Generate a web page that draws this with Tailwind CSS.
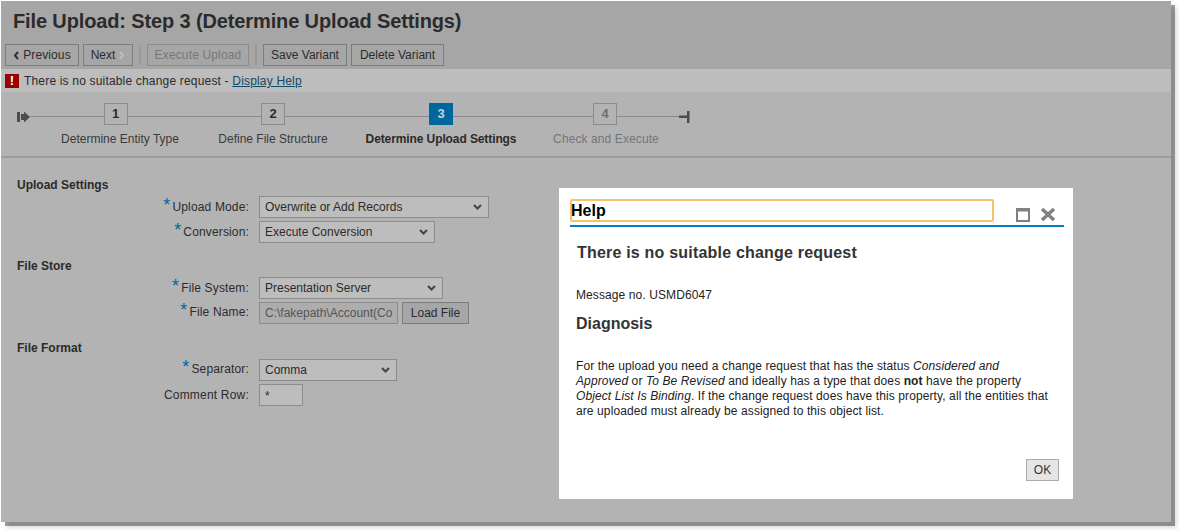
<!DOCTYPE html>
<html lang="en">
<head>
    <meta charset="UTF-8">
    <title>File Upload: Step 3</title>
    <script src="https://cdn.jsdelivr.net/npm/@tailwindcss/browser@4"></script>
</head>
<body class="bg-white min-h-screen pt-px font-['Liberation_Sans',Arial,sans-serif] text-[12px] text-[#2b2b2b]">
    <div class="relative ml-px w-[1170px] h-[521px] bg-[#b3b3b3] shadow-[4px_4px_0_rgba(0,0,0,0.36),6px_6px_5px_rgba(0,0,0,0.15)]">
        <!-- header -->
        <div class="bg-[#a6a6a6] h-[68px] px-1 pt-[9px]">
            <h1 class="ml-2 text-[20px] tracking-[-0.13px] leading-[22px] font-bold text-[#2b2b2b]">File Upload: Step 3 (Determine Upload Settings)</h1>
            <div class="flex items-center mt-[12px] h-[22px]">
                <button class="h-[22px] w-[74px] border border-[#7c7c7c] tracking-[0.1px] flex items-center justify-center gap-[4px]">
                    <svg width="6" height="9" viewBox="0 0 6 9"><path d="M5 1 L2 4.5 L5 8" fill="none" stroke="#333" stroke-width="2"/></svg>Previous
                </button>
                <button class="h-[22px] w-[50px] ml-[4px] border border-[#7c7c7c] flex items-center justify-center gap-[4px]">
                    Next<svg width="6" height="9" viewBox="0 0 6 9"><path d="M1 1 L4 4.5 L1 8" fill="none" stroke="#bdbdbd" stroke-width="2"/></svg>
                </button>
                <div class="w-[2px] h-[20px] bg-[#999] ml-[6px]"></div>
                <button class="h-[22px] w-[102px] ml-[6px] border border-[#8c8c8c] tracking-[0.15px] text-[#787878]">Execute Upload</button>
                <div class="w-[2px] h-[20px] bg-[#999] ml-[6px]"></div>
                <button class="h-[22px] w-[84px] ml-[6px] border border-[#7c7c7c]">Save Variant</button>
                <button class="h-[22px] w-[93px] ml-[4px] border border-[#7c7c7c]">Delete Variant</button>
            </div>
        </div>
        <!-- message bar -->
        <div class="bg-[#bdbdbd] h-[23px] flex items-center px-1">
            <div class="w-[14px] h-[14px] bg-[#990000] text-white font-bold text-[13px] leading-[14px] text-center">!</div>
            <span class="ml-[5px] mt-px tracking-[0.18px]">There is no suitable change request - <a class="underline text-[#0f4a68]">Display Help</a></span>
        </div>
        <!-- roadmap -->
        <div class="relative h-[66px] border-b-2 border-[#9c9c9c]">
            <svg class="absolute left-[16px] top-[19px]" width="14" height="12" viewBox="0 0 14 12"><path d="M0 1h3v10H0z M4 3h3V0.5L13 6l-6 5.5V9H4z" fill="#4d4d4d"/></svg>
            <div class="absolute left-[29px] top-[24px] w-[650px] h-px bg-[#8a8a8a]"></div>
            <svg class="absolute left-[678px] top-[19px]" width="11" height="12" viewBox="0 0 11 12"><path d="M0 4.5h8V0h2.5v12H8V7H0z" fill="#4d4d4d"/></svg>
            <div class="relative flex pt-[11px]">
                <div class="w-[150px] ml-[44px] flex flex-col items-center">
                    <div class="w-[24px] h-[22px] mr-[9px] border border-[#8c8c8c] bg-[#b3b3b3] font-bold text-[13px] leading-[20px] text-center">1</div>
                    <div class="mt-[5px] whitespace-nowrap text-[#3a3a3a]">Determine Entity Type</div>
                </div>
                <div class="w-[150px] ml-[3px] flex flex-col items-center">
                    <div class="w-[24px] h-[22px] border border-[#8c8c8c] bg-[#b3b3b3] font-bold text-[13px] leading-[20px] text-center">2</div>
                    <div class="mt-[5px] whitespace-nowrap text-[#3a3a3a]">Define File Structure</div>
                </div>
                <div class="w-[152px] ml-[17px] flex flex-col items-center">
                    <div class="w-[24px] h-[22px] bg-[#00679e] text-[#c4d4dd] font-bold text-[13px] leading-[22px] text-center">3</div>
                    <div class="mt-[5px] whitespace-nowrap font-bold tracking-[-0.1px]">Determine Upload Settings</div>
                </div>
                <div class="w-[150px] ml-[13px] flex flex-col items-center">
                    <div class="w-[24px] h-[22px] border border-[#8c8c8c] bg-[#b3b3b3] text-[#6e6e6e] font-bold text-[13px] leading-[20px] text-center">4</div>
                    <div class="mt-[5px] ml-[2px] whitespace-nowrap tracking-[0.1px] text-[#757575]">Check and Execute</div>
                </div>
            </div>
        </div>
        <!-- form -->
        <div class="pl-[16px] pt-[21px]">
            <div class="font-bold leading-[12px]">Upload Settings</div>
            <div class="mt-[5px] flex flex-col gap-[3px]">
                <div class="flex items-center h-[22px]">
                    <div class="w-[232px] text-right whitespace-nowrap tracking-[0.15px]"><span class="text-[#00679e] text-[18px] leading-[10px] mr-[2px]">*</span>Upload Mode:</div>
                    <div class="ml-[10px] w-[230px] h-[22px] border border-[#8c8c8c] bg-[#bdbdbd] flex items-center justify-between pl-[5px] pr-[6px]">
                        Overwrite or Add Records
                        <svg width="9" height="6" viewBox="0 0 9 6"><path d="M1 1l3.5 3.5L8 1" fill="none" stroke="#444" stroke-width="2"/></svg>
                    </div>
                </div>
                <div class="flex items-center h-[22px]">
                    <div class="w-[232px] text-right whitespace-nowrap tracking-[0.15px]"><span class="text-[#00679e] text-[18px] leading-[10px] mr-[2px]">*</span>Conversion:</div>
                    <div class="ml-[10px] w-[176px] h-[22px] border border-[#8c8c8c] bg-[#bdbdbd] flex items-center justify-between pl-[5px] pr-[6px]">
                        Execute Conversion
                        <svg width="9" height="6" viewBox="0 0 9 6"><path d="M1 1l3.5 3.5L8 1" fill="none" stroke="#444" stroke-width="2"/></svg>
                    </div>
                </div>
            </div>
            <div class="mt-[17px] font-bold leading-[12px]">File Store</div>
            <div class="mt-[5px] flex flex-col gap-[3px]">
                <div class="flex items-center h-[22px]">
                    <div class="w-[232px] text-right whitespace-nowrap tracking-[0.15px]"><span class="text-[#00679e] text-[18px] leading-[10px] mr-[2px]">*</span>File System:</div>
                    <div class="ml-[10px] w-[184px] h-[22px] border border-[#8c8c8c] bg-[#bdbdbd] flex items-center justify-between pl-[5px] pr-[6px]">
                        Presentation Server
                        <svg width="9" height="6" viewBox="0 0 9 6"><path d="M1 1l3.5 3.5L8 1" fill="none" stroke="#444" stroke-width="2"/></svg>
                    </div>
                </div>
                <div class="flex items-center h-[22px]">
                    <div class="w-[232px] text-right whitespace-nowrap tracking-[0.15px] mb-[2px]"><span class="text-[#00679e] text-[18px] leading-[10px] mr-[2px]">*</span>File Name:</div>
                    <div class="ml-[10px] w-[139px] h-[22px] border border-[#8c8c8c] bg-[#adadad] text-[#555] flex items-center pl-[5px] overflow-hidden whitespace-nowrap">C:\fakepath\Account(Co</div>
                    <button class="ml-[4px] w-[67px] h-[22px] border border-[#7c7c7c] bg-[#a6a6a6]">Load File</button>
                </div>
            </div>
            <div class="mt-[18px] font-bold leading-[12px]">File Format</div>
            <div class="mt-[5px] flex flex-col gap-[3px]">
                <div class="flex items-center h-[22px]">
                    <div class="w-[232px] text-right whitespace-nowrap tracking-[0.15px] mb-[2px]"><span class="text-[#00679e] text-[18px] leading-[10px] mr-[2px]">*</span>Separator:</div>
                    <div class="ml-[10px] w-[138px] h-[22px] border border-[#8c8c8c] bg-[#bdbdbd] flex items-center justify-between pl-[5px] pr-[6px]">
                        Comma
                        <svg width="9" height="6" viewBox="0 0 9 6"><path d="M1 1l3.5 3.5L8 1" fill="none" stroke="#444" stroke-width="2"/></svg>
                    </div>
                </div>
                <div class="flex items-center h-[22px]">
                    <div class="w-[232px] text-right whitespace-nowrap tracking-[0.2px]">Comment Row:</div>
                    <div class="ml-[10px] w-[44px] h-[22px] border border-[#8c8c8c] bg-[#bdbdbd] pl-[5px] pt-[2px]">*</div>
                </div>
            </div>
        </div>
        <!-- help dialog -->
        <div class="absolute left-[558px] top-[187px] w-[514px] h-[311px] bg-white px-[11px] pt-[11px] text-[#222]">
            <div class="flex items-end border-b-2 border-[#007cc0] h-[28px] pb-[3px] w-[494px]">
                <div class="w-[424px] h-[23px] self-start border-2 border-[#f4c36c] rounded-[2px] text-[16px] font-bold leading-[20px] text-black -indent-px">Help</div>
                <svg class="ml-[22px]" width="14" height="14" viewBox="0 0 14 14"><path d="M1 1h12v12H1z M1 2.5h12" fill="none" stroke="#808080" stroke-width="2"/></svg>
                <svg class="ml-[10px]" width="16" height="15" viewBox="0 0 16 15"><path d="M2 2l12 11M14 2L2 13" fill="none" stroke="#808080" stroke-width="3.5"/></svg>
            </div>
            <div class="pl-[6px]">
                <h2 class="ml-px mt-[17px] text-[16px] leading-[18px] tracking-[0.2px] font-bold text-[#333]">There is no suitable change request</h2>
                <p class="mt-[26px] leading-[14px] tracking-[0.1px]">Message no. USMD6047</p>
                <h3 class="mt-[13px] text-[16px] leading-[18px] font-bold text-[#333]">Diagnosis</h3>
                <p class="mt-[26px] w-[478px] leading-[15px] tracking-[0.1px]">For the upload you need a change request that has the status <i>Considered and Approved</i> or <i>To Be Revised</i> and ideally has a type that does <b>not</b> have the property <i>Object List Is Binding</i>. If the change request does have this property, all the entities that are uploaded must already be assigned to this object list.</p>
            </div>
            <button class="absolute left-[467px] top-[271px] w-[33px] h-[22px] bg-[#e5e5e5] border border-[#ababab] text-[#333]">OK</button>
        </div>
    </div>
</body>
</html>
